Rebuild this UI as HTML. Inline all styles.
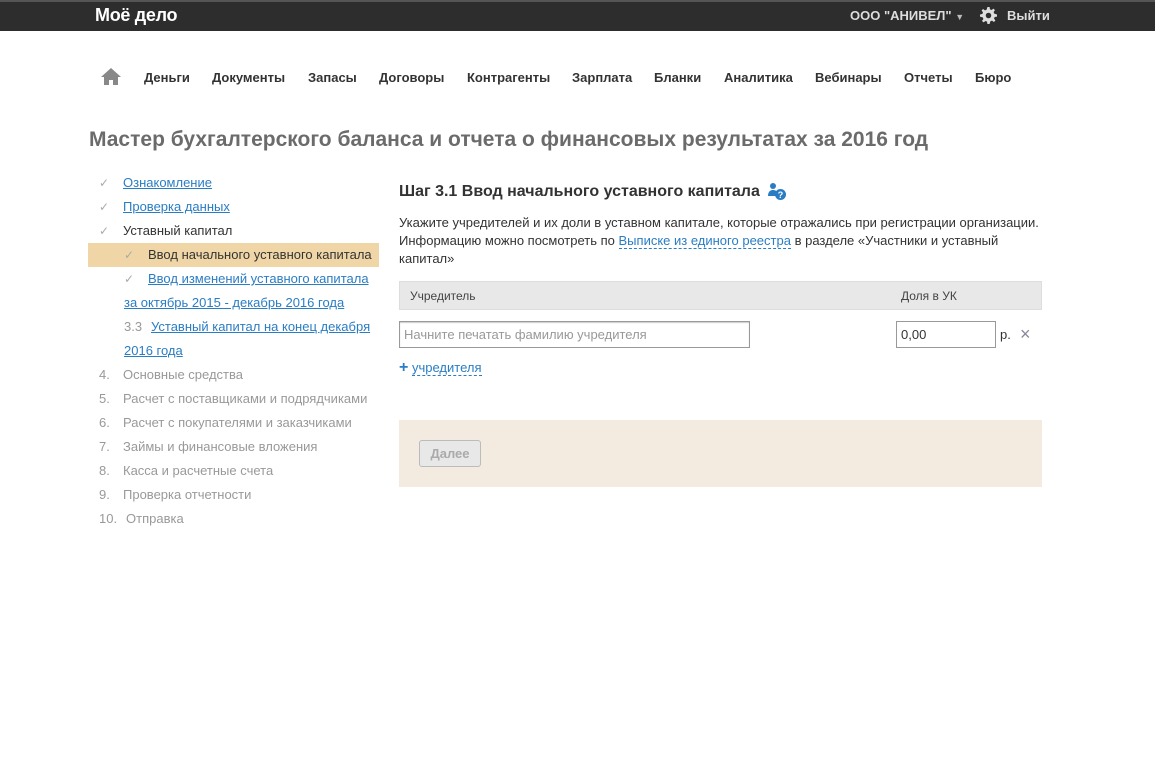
<!DOCTYPE html>
<html><head><meta charset="utf-8"><style>
*{margin:0;padding:0;box-sizing:border-box}
body{width:1155px;height:775px;background:#fff;font-family:"Liberation Sans",Arial,sans-serif;position:relative;overflow:hidden;color:#333}
.a{position:absolute;white-space:nowrap}
.top{position:absolute;left:0;top:0;width:1155px;height:31px;background:#2d2d2d;border-top:2px solid #555}
.nav{font-size:13px;font-weight:bold;color:#333;top:70px}
.sb{font-size:13px;color:#333}
.lk{color:#2a7dc4;text-decoration:underline}
.g{color:#999}
.ck{color:#aaa;font-size:12px}
.dash{color:#2a7dc4;border-bottom:1px dashed #2a7dc4}
</style></head><body>
<div class="top"></div>
<div class="a" style="left:95px;top:5px;color:#fff;font-size:18px;font-weight:bold;letter-spacing:-0.3px">Моё дело</div>
<div class="a" style="left:850px;top:8px;color:#ddd;font-size:13px;font-weight:bold">ООО "АНИВЕЛ" <span style="font-size:9px;color:#bbb">▼</span></div>
<svg class="a" style="left:980px;top:7px" width="17" height="17" viewBox="0 0 16 16"><path fill="#ddd" d="M7 0h2l.4 2.2 1.5.6 1.8-1.3 1.4 1.4-1.3 1.8.6 1.5L16 7v2l-2.2.4-.6 1.5 1.3 1.8-1.4 1.4-1.8-1.3-1.5.6L9 16H7l-.4-2.2-1.5-.6-1.8 1.3-1.4-1.4 1.3-1.8-.6-1.5L0 9V7l2.2-.4.6-1.5-1.3-1.8 1.4-1.4 1.8 1.3 1.5-.6z"/><circle cx="8" cy="8" r="2.6" fill="#2d2d2d"/></svg>
<div class="a" style="left:1007px;top:8px;color:#ddd;font-size:13px;font-weight:bold">Выйти</div>

<svg class="a" style="left:101px;top:68px" width="20" height="17" viewBox="0 0 20 17"><path fill="#888" d="M10 0L0 9h3v8h5v-5h4v5h5V9h3z"/></svg>
<div class="a nav" style="left:144px">Деньги</div>
<div class="a nav" style="left:212px">Документы</div>
<div class="a nav" style="left:308px">Запасы</div>
<div class="a nav" style="left:379px">Договоры</div>
<div class="a nav" style="left:467px">Контрагенты</div>
<div class="a nav" style="left:572px">Зарплата</div>
<div class="a nav" style="left:654px">Бланки</div>
<div class="a nav" style="left:724px">Аналитика</div>
<div class="a nav" style="left:815px">Вебинары</div>
<div class="a nav" style="left:904px">Отчеты</div>
<div class="a nav" style="left:975px">Бюро</div>

<div class="a" style="left:89px;top:128px;font-size:21px;font-weight:bold;color:#6b6b6b">Мастер бухгалтерского баланса и отчета о финансовых результатах за 2016 год</div>

<div class="a" style="left:88px;top:243px;width:291px;height:24px;background:#f0d6a6"></div>
<div class="a sb" style="left:99px;top:175px"><span class="ck">✓</span><span class="lk" style="position:absolute;left:24px">Ознакомление</span></div>
<div class="a sb" style="left:99px;top:199px"><span class="ck">✓</span><span class="lk" style="position:absolute;left:24px">Проверка данных</span></div>
<div class="a sb" style="left:99px;top:223px"><span class="ck">✓</span><span style="position:absolute;left:24px">Уставный капитал</span></div>
<div class="a sb" style="left:124px;top:247px"><span class="ck">✓</span><span style="position:absolute;left:24px">Ввод начального уставного капитала</span></div>
<div class="a sb" style="left:124px;top:271px"><span class="ck">✓</span><span class="lk" style="position:absolute;left:24px">Ввод изменений уставного капитала</span></div>
<div class="a sb lk" style="left:124px;top:295px">за октябрь 2015 - декабрь 2016 года</div>
<div class="a sb" style="left:124px;top:319px"><span class="g">3.3</span><span class="lk" style="position:absolute;left:27px">Уставный капитал на конец декабря</span></div>
<div class="a sb lk" style="left:124px;top:343px">2016 года</div>
<div class="a sb g" style="left:99px;top:367px">4.<span style="position:absolute;left:24px">Основные средства</span></div>
<div class="a sb g" style="left:99px;top:391px">5.<span style="position:absolute;left:24px">Расчет с поставщиками и подрядчиками</span></div>
<div class="a sb g" style="left:99px;top:415px">6.<span style="position:absolute;left:24px">Расчет с покупателями и заказчиками</span></div>
<div class="a sb g" style="left:99px;top:439px">7.<span style="position:absolute;left:24px">Займы и финансовые вложения</span></div>
<div class="a sb g" style="left:99px;top:463px">8.<span style="position:absolute;left:24px">Касса и расчетные счета</span></div>
<div class="a sb g" style="left:99px;top:487px">9.<span style="position:absolute;left:24px">Проверка отчетности</span></div>
<div class="a sb g" style="left:99px;top:511px">10.<span style="position:absolute;left:27px">Отправка</span></div>

<div class="a" style="left:399px;top:183px;font-size:16px;font-weight:bold;color:#333">Шаг 3.1 Ввод начального уставного капитала</div>
<svg class="a" style="left:767px;top:182px" width="20" height="19" viewBox="0 0 20 19"><circle cx="6" cy="4" r="3" fill="#2a7dc4"/><path d="M1 14c0-5 3-6 5-6s4 1 5 3v3z" fill="#2a7dc4"/><circle cx="13.5" cy="12.5" r="5.5" fill="#2a7dc4"/><text x="13.5" y="16" font-size="9" font-weight="bold" fill="#fff" text-anchor="middle" font-family="Liberation Sans">?</text></svg>
<div class="a" style="left:399px;top:214px;font-size:13px;line-height:18px;color:#333">Укажите учредителей и их доли в уставном капитале, которые отражались при регистрации организации.<br>Информацию можно посмотреть по <span class="dash">Выписке из единого реестра</span> в разделе «Участники и уставный<br>капитал»</div>

<div class="a" style="left:399px;top:281px;width:643px;height:29px;background:#e8e8e8;border:1px solid #ddd"></div>
<div class="a" style="left:410px;top:289px;font-size:12px;color:#444">Учредитель</div>
<div class="a" style="left:901px;top:289px;font-size:12px;color:#444">Доля в УК</div>
<div class="a" style="left:399px;top:321px;width:351px;height:27px;border:1px solid #999;box-shadow:inset 0 1px 1px #ccc"></div>
<div class="a" style="left:404px;top:327px;font-size:13px;color:#999">Начните печатать фамилию учредителя</div>
<div class="a" style="left:896px;top:321px;width:100px;height:27px;border:1px solid #999"></div>
<div class="a" style="left:901px;top:327px;font-size:13px;color:#333">0,00</div>
<div class="a" style="left:1000px;top:327px;font-size:13px;color:#333">р.</div>
<div class="a" style="left:1020px;top:324px;font-size:18px;color:#889">×</div>
<div class="a" style="left:399px;top:359px;font-size:13px"><span style="color:#2a7dc4;font-weight:bold;font-size:16px">+</span> <span class="dash">учредителя</span></div>

<div class="a" style="left:399px;top:420px;width:643px;height:67px;background:#f3ebdf"></div>
<div class="a" style="left:419px;top:440px;width:62px;height:27px;border:1px solid #bbb;border-radius:3px;background:#e8e8e8;color:#aaa;font-size:13px;font-weight:bold;text-align:center;line-height:25px">Далее</div>
</body></html>
